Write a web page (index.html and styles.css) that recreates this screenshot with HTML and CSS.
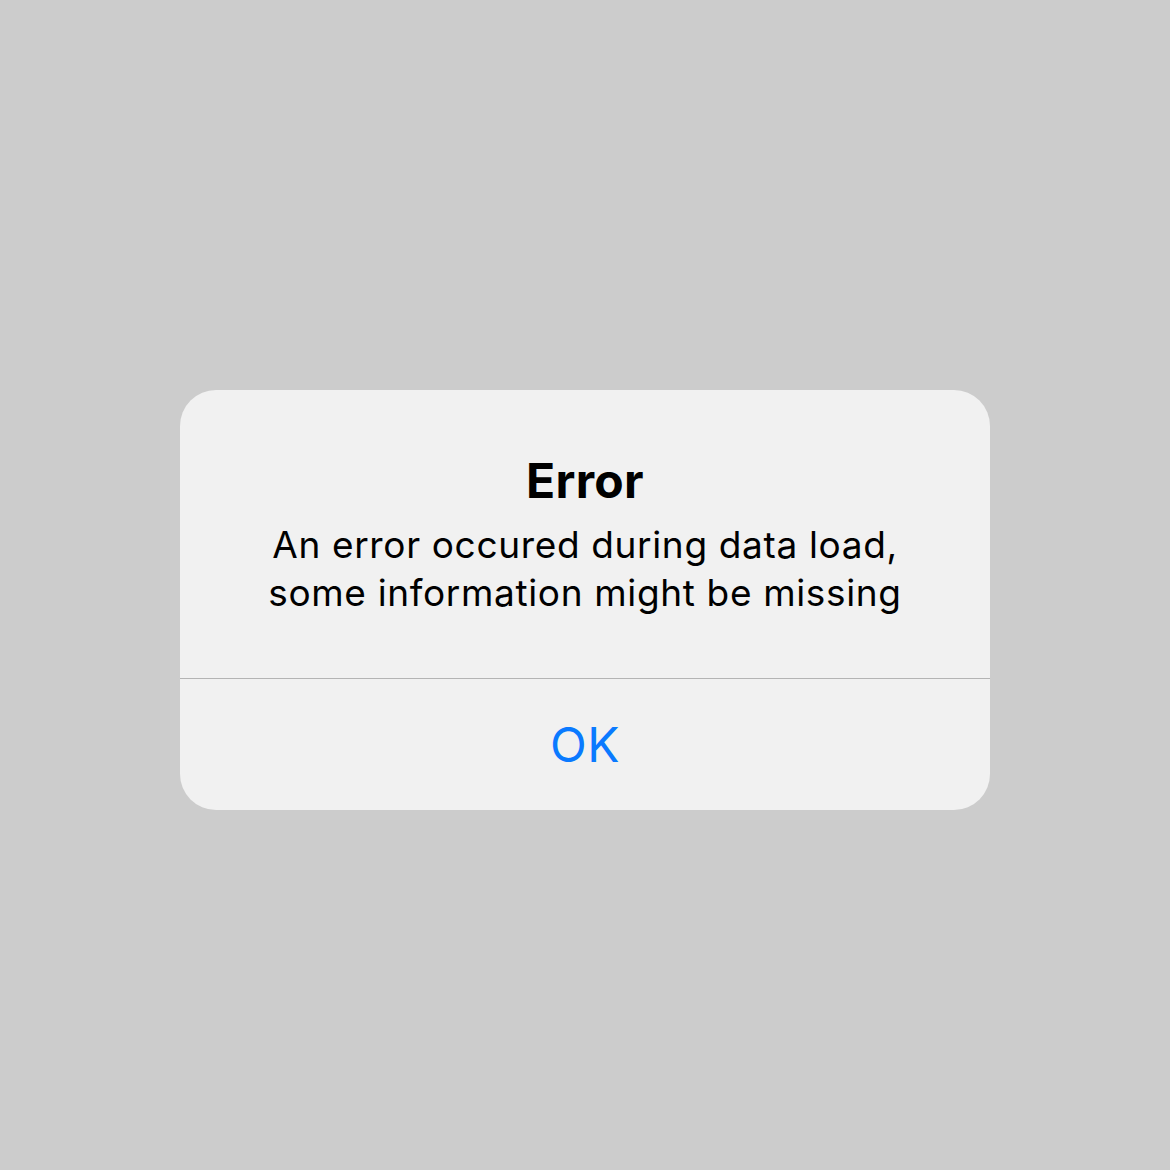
FILE: index.html
```html
<!DOCTYPE html>
<html lang="en">
<head>
    <meta charset="UTF-8">
    <meta name="viewport" content="width=device-width, initial-scale=1.0">
    <title>Error</title>
    <link rel="stylesheet" href="styles.css">
</head>
<body>
    <!-- Alert dialog -->
    <div class="alert">
        <div class="alert-content">
            <h1 class="alert-title">Error</h1>
            <p class="alert-message">An error occured during data load,<br>some information might be missing</p>
        </div>
        <button class="alert-button">OK</button>
    </div>
</body>
</html>
```

FILE: styles.css
```css
body {
    margin: 0;
    height: 1170px;
    padding-top: 30px;
    box-sizing: border-box;
    display: flex;
    align-items: center;
    justify-content: center;
    background-color: #cccccc;
    font-family: Inter, "Liberation Sans", sans-serif;
}

.alert {
    width: 810px;
    background-color: #f1f1f1;
    border-radius: 36px;
    overflow: hidden;
    display: flex;
    flex-direction: column;
}

.alert-content {
    padding: 63px 40px 61px;
    text-align: center;
    border-bottom: 1px solid #b4b4b4;
}

.alert-title {
    margin: 0 0 12px;
    font-size: 48px;
    line-height: 56px;
    font-weight: 700;
    letter-spacing: 0.3px;
    color: #000;
}

.alert-message {
    margin: 0;
    font-size: 37px;
    line-height: 48px;
    letter-spacing: 0.65px;
    color: #000;
}

.alert-button {
    height: 131px;
    border: none;
    background: none;
    font-family: inherit;
    font-size: 48px;
    letter-spacing: 0.5px;
    color: #0a7aff;
    cursor: pointer;
}
```
